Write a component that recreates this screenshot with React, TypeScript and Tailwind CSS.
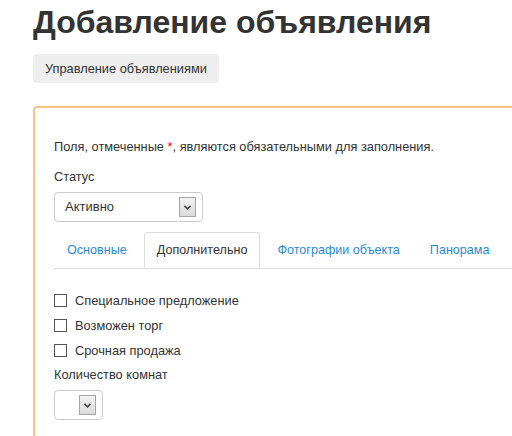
import React from 'react';

function Chevron() {
  return (
    <svg width="7" height="5" viewBox="0 0 7 5">
      <path d="M0.5 0.8 L3.5 3.8 L6.5 0.8" fill="none" stroke="#444" strokeWidth="1.6" />
    </svg>
  );
}

function Select({ label, width }: { label: string; width: string }) {
  return (
    <div className={`${width} h-[30px] rounded-[4px] border border-[#ccc] bg-white flex items-center pl-[10px] pr-[6px]`}>
      <span className="flex-1 text-[13px] text-[#333]">{label}</span>
      <span className="w-[17px] h-[20px] border border-[#a5a5a5] bg-gradient-to-b from-[#f2f2f2] to-[#dcdcdc] flex items-center justify-center">
        <Chevron />
      </span>
    </div>
  );
}

function Check({ label }: { label: string }) {
  return (
    <label className="h-[25px] flex items-center gap-2">
      <span className="w-[13px] h-[13px] border border-[#555] bg-white" />
      <span>{label}</span>
    </label>
  );
}

const tabs = ['Основные', 'Дополнительно', 'Фотографии объекта', 'Панорама'];

export default function App() {
  return (
    <div
      className="w-[512px] h-[436px] overflow-hidden bg-white text-[#333] pl-[33px] pt-[6px]"
      style={{ fontFamily: '"Liberation Sans", Arial, sans-serif' }}
    >
      <h1 className="text-[32px] leading-[33px] font-bold text-[#333] whitespace-nowrap">
        Добавление объявления
      </h1>

      <button className="mt-[15px] h-[29px] px-3 rounded-[4px] bg-[#eeeeee] text-[12.8px] text-[#333]">
        Управление объявлениями
      </button>

      <div className="mt-[23px] border-l-2 border-t-2 border-[#ffc184] rounded-tl-[4px] pl-[19px] pt-[30px] text-[12.8px] leading-[18px]">
        <p className="whitespace-nowrap">
          Поля, отмеченные <span className="text-[#e00]">*</span>, являются обязательными для заполнения.
        </p>

        <div className="mt-[12px]">Статус</div>
        <div className="mt-[6px]">
          <Select label="Активно" width="w-[149px]" />
        </div>

        <div className="mt-[10px] flex border-b border-[#ddd] whitespace-nowrap text-[12.6px]">
          {tabs.map((t, i) =>
            i === 1 ? (
              <div
                key={t}
                className="shrink-0 h-[36px] px-3 mr-1 -mb-px flex items-center bg-white border border-[#ddd] border-b-white rounded-t-[4px]"
              >
                {t}
              </div>
            ) : (
              <div key={t} className="shrink-0 h-[36px] px-3 mr-1 flex items-center text-[#2a8ad6] border border-transparent">
                {t}
              </div>
            )
          )}
        </div>

        <div className="mt-[19px]">
          <Check label="Специальное предложение" />
          <Check label="Возможен торг" />
          <Check label="Срочная продажа" />
        </div>

        <div className="mt-[3px]">Количество комнат</div>
        <div className="mt-[6px] pb-10">
          <Select label="" width="w-[49px]" />
        </div>
      </div>
    </div>
  );
}
